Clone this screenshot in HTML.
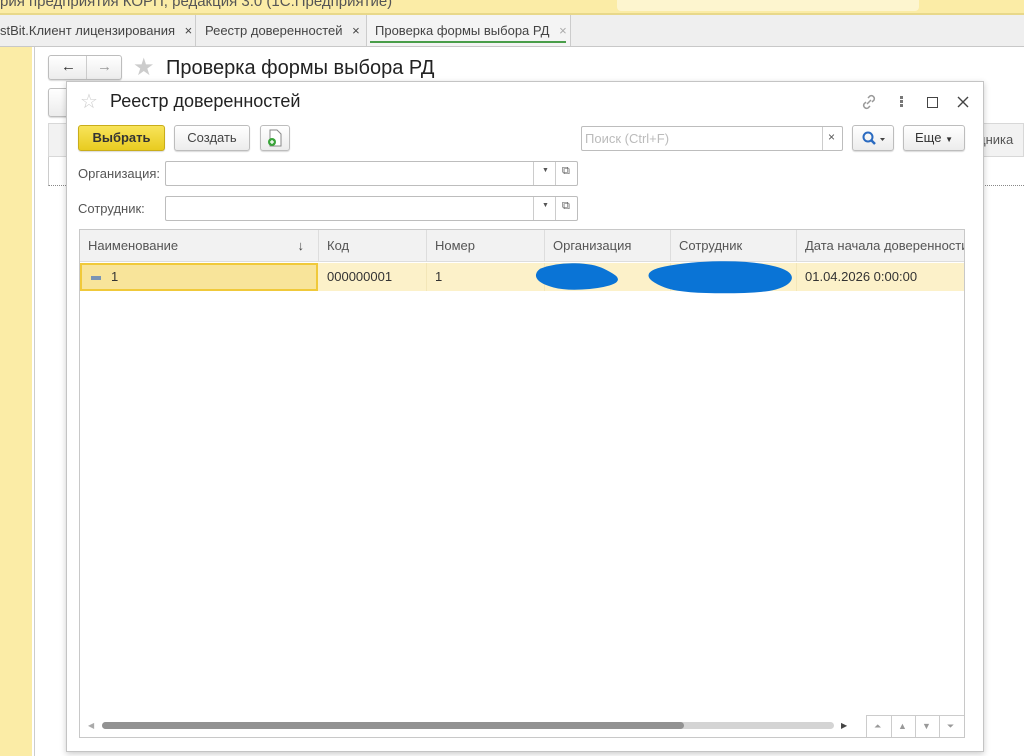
<!DOCTYPE html>
<html><head><meta charset="utf-8"><style>
*{box-sizing:border-box;margin:0;padding:0}
body{width:1024px;height:756px;position:relative;overflow:hidden;background:#fff;font-family:"Liberation Sans",Arial,sans-serif;font-size:13px;color:#333}
.a{position:absolute}
.btn{position:absolute;border:1px solid #bdbdbd;border-radius:3px;background:linear-gradient(#fff,#ececec);box-shadow:0 1px 1px rgba(0,0,0,.15);text-align:center;color:#444;font-size:13px}
.fld{position:absolute;border:1px solid #bdbdbd;border-radius:2px;background:#fff}
.th{position:absolute;top:0;height:32px;line-height:32px;padding-left:8px;border-right:1px solid #ddd;color:#555;font-size:13px}
.td{position:absolute;top:0;height:28px;line-height:28px;padding-left:8px;border-right:1px solid #f3e6b8;font-size:13px;color:#333}
</style></head><body>
<div class="a" style="left:0;top:0;width:1024px;height:14px;background:#fbeca6"></div>
<div class="a" style="left:0;top:-7px;font-size:15px;color:#555;white-space:nowrap">рия предприятия КОРП, редакция 3.0 (1С:Предприятие)</div>
<div class="a" style="left:617px;top:0;width:302px;height:11px;background:#fdf5cf;border-radius:0 0 4px 4px"></div>
<div class="a" style="left:0;top:13px;width:1024px;height:2px;background:#e8d88a"></div>
<div class="a" style="left:0;top:15px;width:1024px;height:32px;background:#efefef;border-bottom:1px solid #c8c8c8"></div>
<div class="a" style="left:0;top:15px;width:196px;height:31px;border-right:1px solid #ccc;line-height:31px;font-size:13px;color:#444;white-space:nowrap">stBit.Клиент лицензирования <span style="margin-left:6px">×</span></div>
<div class="a" style="left:197px;top:15px;width:170px;height:31px;border-right:1px solid #ccc;line-height:31px;padding-left:8px;font-size:13px;color:#444;white-space:nowrap">Реестр доверенностей <span style="margin-left:6px">×</span></div>
<div class="a" style="left:367px;top:15px;width:204px;height:31px;background:#f4f4f4;border-right:1px solid #ccc;line-height:31px;padding-left:8px;font-size:13px;color:#444;white-space:nowrap">Проверка формы выбора РД <span style="margin-left:6px;color:#aaa">×</span></div>
<div class="a" style="left:370px;top:41px;width:196px;height:2px;background:#4a9e4a"></div>
<div class="a" style="left:0;top:47px;width:32px;height:709px;background:#fbeca6"></div>
<div class="a" style="left:34px;top:47px;width:1px;height:709px;background:#ccc"></div>
<!-- behind form -->
<div class="btn" style="left:48px;top:55px;width:74px;height:25px"><span style="position:absolute;left:12px;top:2px;font-size:15px;color:#333">←</span><span style="position:absolute;left:37px;top:0;width:1px;height:23px;background:#ccc"></span><span style="position:absolute;left:48px;top:2px;font-size:15px;color:#999">→</span></div>
<div class="a" style="left:133px;top:53px;font-size:24px;color:#ccc">★</div>
<div class="a" style="left:166px;top:57px;font-size:20px;color:#222">Проверка формы выбора РД</div>
<div class="btn" style="left:48px;top:88px;width:30px;height:29px"></div>
<div class="a" style="left:48px;top:123px;width:976px;height:34px;background:#f2f2f2;border:1px solid #d8d8d8"></div>
<div class="a" style="left:978px;top:132px;font-size:13px;color:#555">дника</div>
<div class="a" style="left:48px;top:157px;width:976px;height:29px;border-left:1px solid #ccc;border-bottom:1px dotted #888"></div>
<!-- dialog -->
<div class="a" style="left:66px;top:81px;width:918px;height:671px;background:#fff;border:1px solid #c4c4c4;box-shadow:0 2px 6px rgba(0,0,0,.2)"></div>
<div class="a" style="left:80px;top:89px;font-size:20px;color:#ccc">☆</div>
<div class="a" style="left:110px;top:91px;font-size:18px;color:#222">Реестр доверенностей</div>
<svg class="a" style="left:860px;top:93px" width="18" height="18" viewBox="0 0 18 18" fill="none" stroke="#999" stroke-width="1.5"><path d="M8 5l2-2a3 3 0 0 1 4 4l-2 2M10 13l-2 2a3 3 0 0 1-4-4l2-2M7 11l4-4"/></svg>
<div class="a" style="left:900px;top:96px;width:3px;height:3px;background:#777;box-shadow:0 4px 0 #777,0 8px 0 #777"></div>
<div class="a" style="left:927px;top:97px;width:11px;height:11px;border:1.5px solid #444"></div>
<svg class="a" style="left:957px;top:96px" width="12" height="12" viewBox="0 0 12 12"><path d="M1 1l10 10M11 1L1 11" stroke="#444" stroke-width="1.4"/></svg>
<div class="btn" style="left:78px;top:125px;width:87px;height:26px;line-height:24px;background:linear-gradient(#f8e45a,#e8cc20);border-color:#c9ad1a;color:#333;font-weight:bold">Выбрать</div>
<div class="btn" style="left:174px;top:125px;width:76px;height:26px;line-height:24px">Создать</div>
<div class="btn" style="left:260px;top:125px;width:30px;height:26px"><svg width="16" height="18" viewBox="0 0 16 18" style="margin-top:3px"><path d="M3 1h7l4 4v12H3z" fill="#fff" stroke="#888"/><circle cx="5" cy="13" r="4" fill="#3aa43a"/><path d="M5 11v4M3 13h4" stroke="#fff" stroke-width="1.3"/></svg></div>
<div class="fld" style="left:581px;top:126px;width:262px;height:25px"><span style="position:absolute;left:3px;top:4px;color:#bbb">Поиск (Ctrl+F)</span><span style="position:absolute;left:240px;top:0;width:1px;height:23px;background:#ccc"></span><span style="position:absolute;left:246px;top:3px;color:#555;font-size:12px">×</span></div>
<div class="btn" style="left:852px;top:125px;width:42px;height:26px"><svg width="26" height="20" viewBox="0 0 26 20" style="margin-top:3px"><circle cx="8" cy="8" r="4.5" fill="none" stroke="#2a6ac0" stroke-width="2"/><path d="M11 11l4 4" stroke="#2a6ac0" stroke-width="2.5"/><path d="M20 9h5l-2.5 3z" fill="#444"/></svg></div>
<div class="btn" style="left:903px;top:125px;width:62px;height:26px;line-height:24px;color:#333">Еще <span style="font-size:8px">▼</span></div>
<div class="a" style="left:78px;top:166px;color:#555">Организация:</div>
<div class="fld" style="left:165px;top:161px;width:413px;height:25px"><span style="position:absolute;left:367px;top:0;width:1px;height:23px;background:#ccc"></span><span style="position:absolute;left:376px;top:5px;font-size:7px;color:#555">▼</span><span style="position:absolute;left:389px;top:0;width:1px;height:23px;background:#ccc"></span><span style="position:absolute;left:396px;top:3px;font-size:11px;color:#555">⧉</span></div>
<div class="a" style="left:78px;top:201px;color:#555">Сотрудник:</div>
<div class="fld" style="left:165px;top:196px;width:413px;height:25px"><span style="position:absolute;left:367px;top:0;width:1px;height:23px;background:#ccc"></span><span style="position:absolute;left:376px;top:5px;font-size:7px;color:#555">▼</span><span style="position:absolute;left:389px;top:0;width:1px;height:23px;background:#ccc"></span><span style="position:absolute;left:396px;top:3px;font-size:11px;color:#555">⧉</span></div>
<!-- table -->
<div class="a" style="left:79px;top:229px;width:886px;height:509px;border:1px solid #c8c8c8;overflow:hidden">
 <div class="a" style="left:0;top:0;width:886px;height:32px;background:#f2f2f2;border-bottom:1px solid #ddd">
  <div class="th" style="left:0;width:239px">Наименование<span style="position:absolute;right:14px;color:#444">↓</span></div>
  <div class="th" style="left:239px;width:108px">Код</div>
  <div class="th" style="left:347px;width:118px">Номер</div>
  <div class="th" style="left:465px;width:126px">Организация</div>
  <div class="th" style="left:591px;width:126px">Сотрудник</div>
  <div class="th" style="left:717px;width:200px;white-space:nowrap">Дата начала доверенности</div>
 </div>
 <div class="a" style="left:0;top:33px;width:886px;height:28px;background:#fcf1c9">
  <div class="td" style="left:0;width:238px;background:#f8e49a;border:2px solid #f0c93a;line-height:24px;padding-left:9px"><span style="display:inline-block;width:10px;height:4px;background:#7a94b4;vertical-align:middle;margin-right:10px"></span>1</div>
  <div class="td" style="left:239px;width:108px">000000001</div>
  <div class="td" style="left:347px;width:118px">1</div>
  <div class="td" style="left:465px;width:126px"></div>
  <div class="td" style="left:591px;width:126px"></div>
  <div class="td" style="left:717px;width:200px">01.04.2026 0:00:00</div>
 </div>
 <svg class="a" style="left:455px;top:30px" width="260" height="36"><path d="M6 10c20-8 50-6 62 0s20 10 6 14-40 6-55 2S-2 16 6 10zM130 8c30-6 80-8 110 0s10 20-10 22-80 4-100-4S110 12 130 8z" fill="#0a74d6" stroke="#0a74d6" stroke-width="3"/></svg>
 <div class="a" style="left:8px;top:491px;font-size:8px;color:#aaa">◀</div>
 <div class="a" style="left:22px;top:492px;width:732px;height:7px;background:#d4d4d4;border-radius:4px"></div>
 <div class="a" style="left:22px;top:492px;width:582px;height:7px;background:#929292;border-radius:4px"></div>
 <div class="a" style="left:761px;top:491px;font-size:8px;color:#444">▶</div>
 <div class="a" style="left:786px;top:485px;width:100px;height:24px;border-top:1px solid #ccc;border-left:1px solid #ccc;font-size:9px;color:#999">
  <span style="position:absolute;left:7px;top:5px">⏶</span><span style="position:absolute;left:24px;top:0;width:1px;height:24px;background:#ccc"></span>
  <span style="position:absolute;left:31px;top:5px">▲</span><span style="position:absolute;left:48px;top:0;width:1px;height:24px;background:#ccc"></span>
  <span style="position:absolute;left:55px;top:5px">▼</span><span style="position:absolute;left:72px;top:0;width:1px;height:24px;background:#ccc"></span>
  <span style="position:absolute;left:80px;top:5px">⏷</span>
 </div>
</div>
</body></html>
